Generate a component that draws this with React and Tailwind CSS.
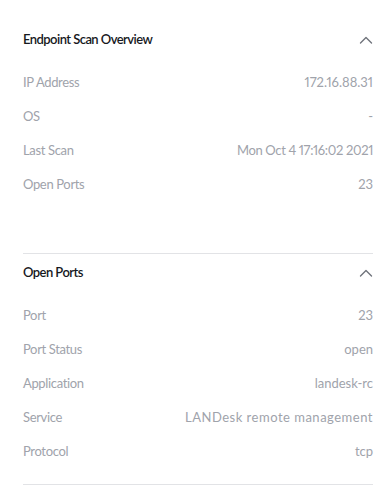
import React from "react";

function Chevron() {
  return (
    <svg width="14" height="8" viewBox="0 0 14 8" fill="none" className="text-[#70747c]">
      <path d="M1.5 7L7 1.5L12.5 7" stroke="currentColor" strokeWidth="1.4" strokeLinecap="round" strokeLinejoin="round" />
    </svg>
  );
}

function Row({ label, value, valueClass = "" }) {
  return (
    <div className="flex h-[34px] items-center justify-between text-[13px] text-[#a0a3ab] proportional-nums">
      <span className="tracking-[-0.35px]">{label}</span>
      <span className={valueClass}>{value}</span>
    </div>
  );
}

function Section({ title, rows, className }) {
  return (
    <div className={className}>
      <div className="flex h-[36px] items-center justify-between">
        <span className="text-[13px] font-semibold tracking-[-0.55px] text-[#16181d]">{title}</span>
        <Chevron />
      </div>
      <div className="pt-[8px]">
        {rows.map((r) => (
          <Row key={r[0]} label={r[0]} value={r[1]} valueClass={r[2]} />
        ))}
      </div>
    </div>
  );
}

export default function App() {
  return (
    <div className="min-h-[502px] w-[388px] bg-white pl-[23px] pr-[15px]" style={{ fontFamily: "Lato, 'Noto Sans', sans-serif" }}>
      <Section
        title="Endpoint Scan Overview"
        className="pt-[22px] pb-[51px]"
        rows={[
          ["IP Address", "172.16.88.31"],
          ["OS", "-"],
          ["Last Scan", "Mon Oct 4 17:16:02 2021", "tracking-[-0.35px]"],
          ["Open Ports", "23"],
        ]}
      />
      <div className="h-px bg-[#e2e3e6]" />
      <Section
        title="Open Ports"
        className="pt-[1px] pb-[15px]"
        rows={[
          ["Port", "23"],
          ["Port Status", "open"],
          ["Application", "landesk-rc"],
          ["Service", "LANDesk remote management", "tracking-[0.5px]"],
          ["Protocol", "tcp"],
        ]}
      />
      <div className="h-px bg-[#e2e3e6]" />
    </div>
  );
}
